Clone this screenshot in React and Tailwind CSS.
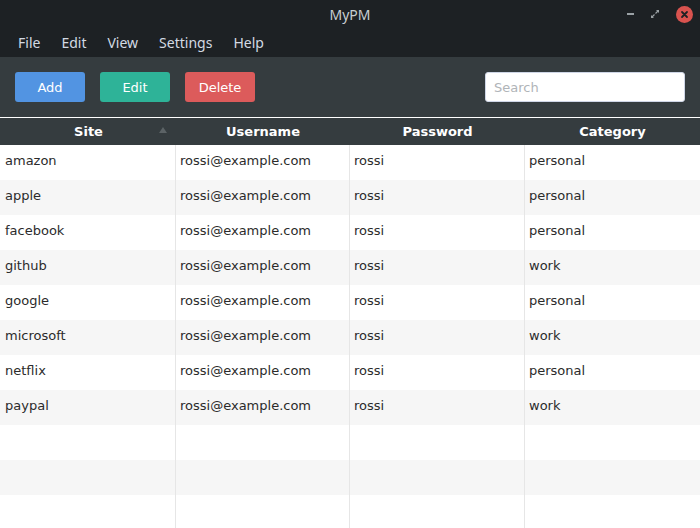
import React from "react";

const ROWS = [
  ["amazon", "rossi@example.com", "rossi", "personal"],
  ["apple", "rossi@example.com", "rossi", "personal"],
  ["facebook", "rossi@example.com", "rossi", "personal"],
  ["github", "rossi@example.com", "rossi", "work"],
  ["google", "rossi@example.com", "rossi", "personal"],
  ["microsoft", "rossi@example.com", "rossi", "work"],
  ["netflix", "rossi@example.com", "rossi", "personal"],
  ["paypal", "rossi@example.com", "rossi", "work"],
  ["", "", "", ""],
  ["", "", "", ""],
  ["", "", "", ""],
];

const MENUS = ["File", "Edit", "View", "Settings", "Help"];

// widths of the four columns (border included), px
const COLS = ["w-[176px]", "w-[174px]", "w-[175px]", "flex-1"];

function TitleBar() {
  return (
    <div className="relative h-[28px] bg-[#1d2124] flex items-center justify-center">
      <span className="text-[14px] text-[#c8cfd2] font-['Noto_Sans',sans-serif]">MyPM</span>
      {/* window controls */}
      <div className="absolute right-[7px] top-0 h-full flex items-center gap-[14px]">
        <div className="w-[7px] h-[2px] bg-[#9aa1a5]" />
        <svg width="14" height="14" viewBox="0 0 14 14">
          <path d="M8 3h3v3z M6 11H3V8z" fill="#9aa1a5" />
          <path d="M7.5 6.5l3-3 M6.5 7.5l-3 3" stroke="#9aa1a5" strokeWidth="1.2" />
        </svg>
        <svg width="17" height="17" viewBox="0 0 17 17">
          <circle cx="8.5" cy="8.5" r="8.5" fill="#d9534f" />
          <path d="M6 6l5 5M11 6l-5 5" stroke="#1d2124" strokeWidth="1.8" strokeLinecap="round" />
        </svg>
      </div>
    </div>
  );
}

function MenuBar() {
  return (
    <div className="h-[29px] bg-[#1d2124] flex items-center pl-[18px] gap-[21px] font-['Noto_Sans',sans-serif] text-[14px] text-[#d3dae3]">
      {MENUS.map((m) => (
        <span key={m}>{m}</span>
      ))}
    </div>
  );
}

function Toolbar() {
  return (
    <div className="h-[60px] bg-[#353c3f] flex items-center px-[15px]">
      <div className="flex gap-[15px]">
        <button className="w-[70px] h-[30px] pt-[1px] rounded-[3px] bg-[#5294e2] text-white text-[13px]">Add</button>
        <button className="w-[70px] h-[30px] pt-[1px] rounded-[3px] bg-[#2eb398] text-white text-[13px]">Edit</button>
        <button className="w-[70px] h-[30px] pt-[1px] rounded-[3px] bg-[#dc5b5b] text-white text-[13px]">Delete</button>
      </div>
      <input
        placeholder="Search"
        className="ml-auto w-[200px] h-[30px] rounded-[3px] bg-white border border-[#cfd6e6] px-[8px] text-[13px] placeholder:text-[#b0b4b8] outline-none"
      />
    </div>
  );
}

function Table() {
  return (
    <div className="flex flex-col">
      <div className="h-[1px] bg-white ml-[1px]" />
      <div className="h-[27px] bg-[#353c3f] flex items-center text-white font-bold text-[13px]">
        <div className={`${COLS[0]} relative text-center pl-[1px]`}>
          Site
          <svg className="absolute right-[8px] top-[4px]" width="10" height="8" viewBox="0 0 10 8">
            <path d="M5 1L9 7H1z" fill="#5c6366" />
          </svg>
        </div>
        <div className={`${COLS[1]} text-center`}>Username</div>
        <div className={`${COLS[2]} text-center`}>Password</div>
        <div className={`${COLS[3]} text-center`}>Category</div>
      </div>
      {ROWS.map((r, i) => (
        <div key={i} className={`h-[35px] flex text-[13px] text-[#2b2b2b] ${i % 2 ? "bg-[#f6f6f6]" : "bg-white"}`}>
          {r.map((c, j) => (
            <div
              key={j}
              className={`${COLS[j]} pb-[3px] flex items-center ${j === 0 ? "pl-[5px]" : "pl-[4px]"} ${j < 3 ? "border-r border-[#e6e6e6]" : ""}`}
            >
              {c}
            </div>
          ))}
        </div>
      ))}
    </div>
  );
}

export default function App() {
  return (
    <div className="w-[700px] h-[528px] overflow-hidden bg-white font-['DejaVu_Sans',sans-serif]">
      <TitleBar />
      <MenuBar />
      <Toolbar />
      <Table />
    </div>
  );
}
